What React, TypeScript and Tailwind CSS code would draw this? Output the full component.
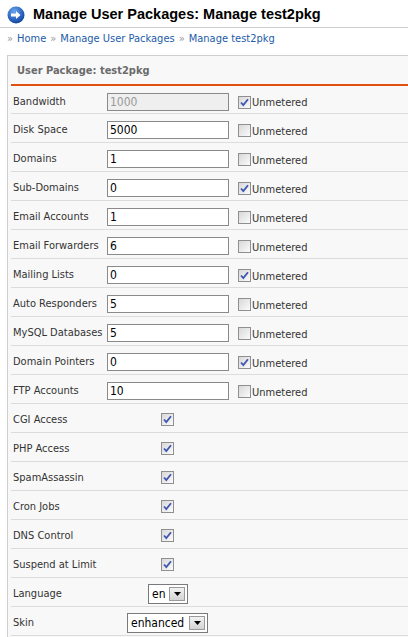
import React from "react";

const font = { fontFamily: '"DejaVu Sans Condensed", "Liberation Sans", Arial, sans-serif' };

function Check({ checked = false }: { checked?: boolean }) {
  return (
    <span className="inline-flex w-[13px] h-[13px] border border-[#8f8f8f] bg-gradient-to-br from-[#d8d8d8] to-[#fbfbfb] items-center justify-center shrink-0">
      {checked && (
        <svg width="9" height="9" viewBox="0 0 9 9">
          <path d="M1 4.5 L3.3 7 L8 1.2" fill="none" stroke="#3f56b0" strokeWidth="1.8" />
        </svg>
      )}
    </span>
  );
}

function Select({ value, width }: { value: string; width: string }) {
  return (
    <span className={`inline-flex items-center h-[20px] mt-[3px] border border-[#7a7a7a] bg-white ${width}`}>
      <span className="flex-1 pl-[3px] text-[12px] text-black leading-none">{value}</span>
      <span className="w-[16px] h-[14px] mr-[2px] bg-gradient-to-b from-[#f2f2f2] to-[#d4d4d4] border border-[#9a9a9a] flex items-center justify-center">
        <svg width="7" height="4" viewBox="0 0 7 4">
          <path d="M0 0 L7 0 L3.5 4 Z" fill="#000" />
        </svg>
      </span>
    </span>
  );
}

const inputRows: [string, string, boolean, boolean?][] = [
  ["Bandwidth", "1000", true, true],
  ["Disk Space", "5000", false],
  ["Domains", "1", false],
  ["Sub-Domains", "0", true],
  ["Email Accounts", "1", false],
  ["Email Forwarders", "6", false],
  ["Mailing Lists", "0", true],
  ["Auto Responders", "5", false],
  ["MySQL Databases", "5", false],
  ["Domain Pointers", "0", true],
  ["FTP Accounts", "10", false],
];

const checkRows = ["CGI Access", "PHP Access", "SpamAssassin", "Cron Jobs", "DNS Control", "Suspend at Limit"];

export default function App() {
  return (
    <div className="w-[408px] h-[637px] overflow-hidden bg-white" style={font}>
      <div className="flex items-center h-[28px] pt-[3px] border-b border-[#cfcfcf] pl-[7px]">
        <svg width="18" height="18" viewBox="0 0 18 18" className="mr-[8px]">
          <defs>
            <radialGradient id="g" cx="40%" cy="30%" r="75%">
              <stop offset="0" stopColor="#6aa5f0" />
              <stop offset="1" stopColor="#0b3f9c" />
            </radialGradient>
          </defs>
          <circle cx="9" cy="9" r="8.5" fill="url(#g)" />
          <path d="M4 7.6 H9 V5 L13.5 9 L9 13 V10.4 H4 Z" fill="#fff" />
        </svg>
        <span
          className="text-[14.5px] font-bold text-black whitespace-nowrap"
          style={{ fontFamily: '"Liberation Sans", Arial, sans-serif' }}
        >
          Manage User Packages: Manage test2pkg
        </span>
      </div>
      <div className="pl-[7px] h-[22px] mb-[5px] text-[11px] flex items-center gap-[4px] whitespace-nowrap">
        <span className="text-[#9a9a9a]">»</span>
        <span className="text-[#1d5ca8]">Home</span>
        <span className="text-[#9a9a9a]">»</span>
        <span className="text-[#1d5ca8]">Manage User Packages</span>
        <span className="text-[#9a9a9a]">»</span>
        <span className="text-[#1d5ca8]">Manage test2pkg</span>
      </div>
      <div className="ml-[7px] border-l border-t border-[#cfcfcf] bg-[#f8f8f8] pl-[3px] h-[600px]">
        <div className="h-[30px] flex items-center pl-[6px] pt-[3px] border-b-2 border-[#e0500f] text-[11px] font-bold text-[#6b6b6b]">
          User Package: test2pkg
        </div>
        {inputRows.map(([label, val, checked, disabled], i) => (
          <div
            key={label}
            className={`${i === 0 ? "h-[28px]" : "h-[29px]"} flex items-center border-b border-[#dcdcdc] text-[11px] text-[#333] whitespace-nowrap`}
          >
            <span className="w-[96px] pl-[2px] pt-[5px]">{label}</span>
            <span
              className={`w-[122px] h-[18px] mt-[4px] border border-[#8a8a8a] flex items-center pl-[2px] text-[12px] ${
                disabled ? "bg-[#efefef] text-[#999]" : "bg-white text-black"
              }`}
            >
              {val}
            </span>
            <span className="ml-[9px] mt-[5px] flex items-center">
              <Check checked={checked} />
              <span className="ml-[1px] mt-[3px] text-[11px] text-[#333]">Unmetered</span>
            </span>
          </div>
        ))}
        {checkRows.map((label) => (
          <div key={label} className="h-[29px] flex items-center border-b border-[#dcdcdc] text-[11px] text-[#333] whitespace-nowrap">
            <span className="w-[150px] pl-[2px] pt-[5px]">{label}</span>
            <span className="mt-[3px] flex">
              <Check checked />
            </span>
          </div>
        ))}
        <div className="h-[29px] flex items-center border-b border-[#dcdcdc] text-[11px] text-[#333]">
          <span className="w-[137px] pl-[2px] pt-[5px]">Language</span>
          <Select value="en" width="w-[40px]" />
        </div>
        <div className="h-[29px] flex items-center border-b border-[#dcdcdc] text-[11px] text-[#333]">
          <span className="w-[116px] pl-[2px] pt-[5px]">Skin</span>
          <Select value="enhanced" width="w-[81px]" />
        </div>
      </div>
    </div>
  );
}
